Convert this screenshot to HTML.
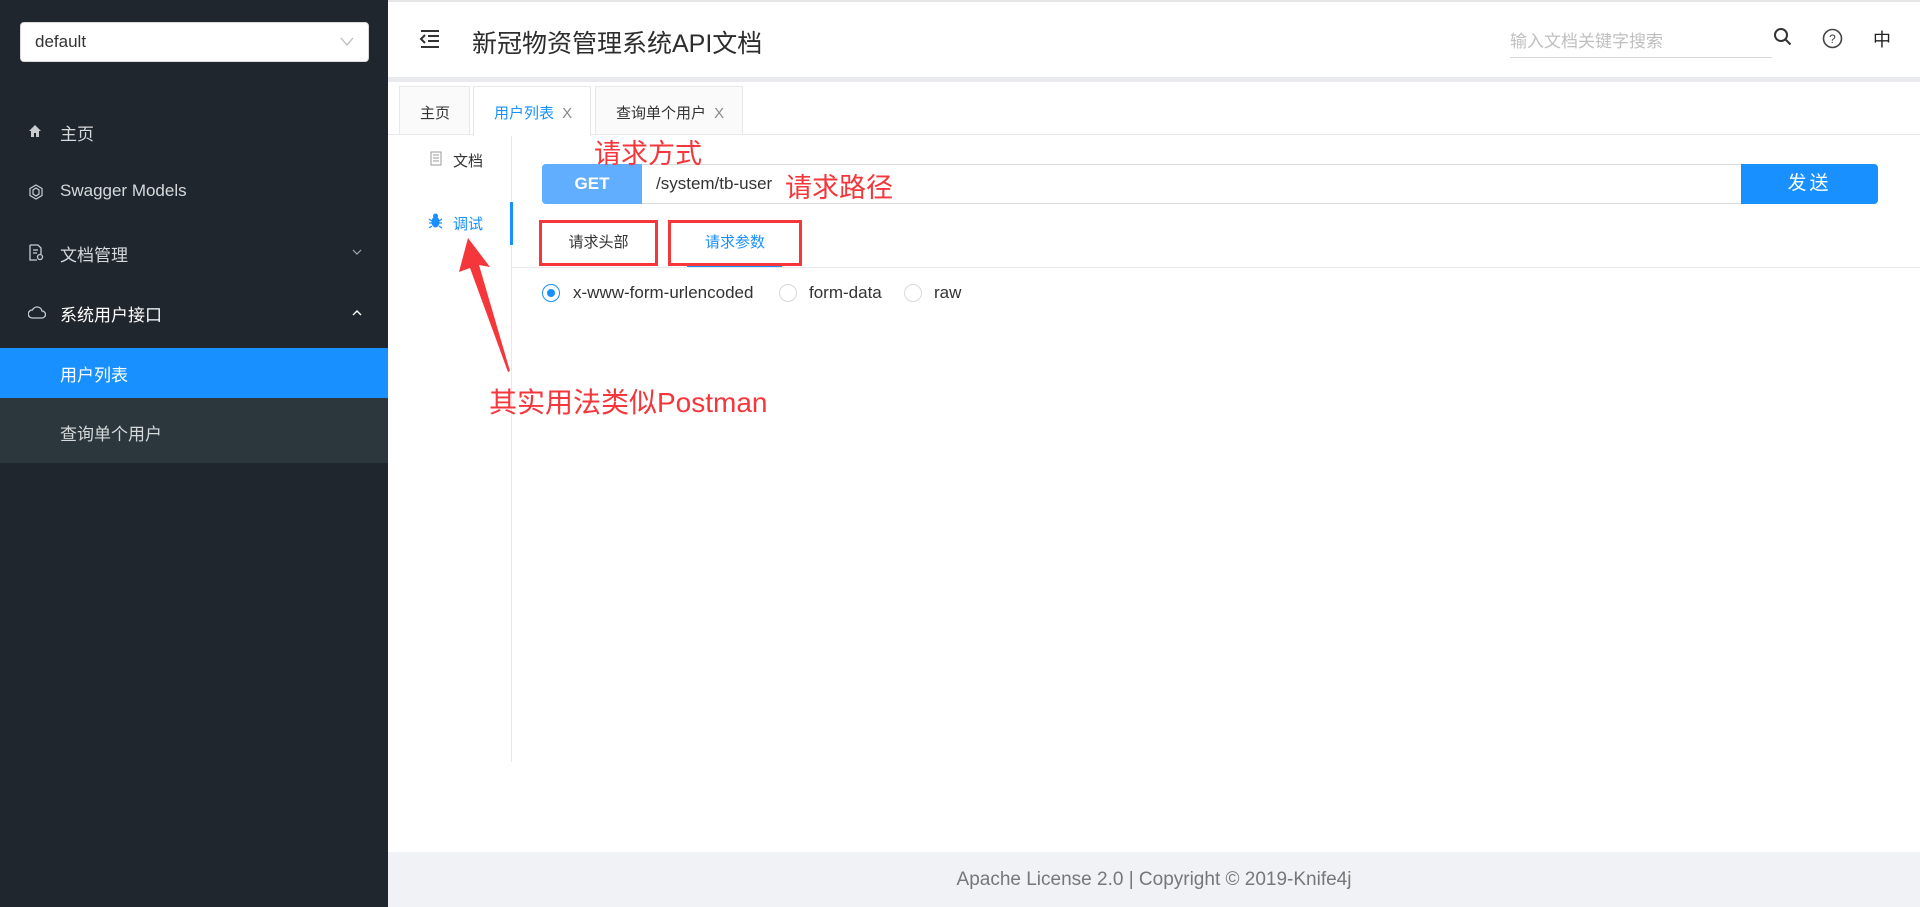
<!DOCTYPE html>
<html><head><meta charset="utf-8"><style>
*{box-sizing:border-box;margin:0;padding:0}
body{width:1920px;height:907px;overflow:hidden;font-family:"Liberation Sans","Noto Sans CJK SC",sans-serif;background:#fff;position:relative}
.a{position:absolute}
.side{left:0;top:0;width:388px;height:907px;background:#1f262d}
.sel{left:20px;top:22px;width:349px;height:40px;background:#fff;border-radius:4px;border:1px solid #d9d9d9;font-size:17px;color:#333;padding:9px 14px}
.mi{left:0;width:388px;color:#d6d9dc;font-size:17px}
.mi span{position:absolute;left:60px}
.ic{position:absolute;left:28px}
.red{color:#f5363a;font-size:27px;font-family:"Liberation Sans","Noto Sans CJK SC",sans-serif}
</style></head><body>
<div class="a" style="left:0;top:0;width:1920px;height:2px;background:#e6e6e6"></div>
<div class="a side"></div>
<div class="a sel">default<svg class="a" style="right:14px;top:14px" width="14" height="10" viewBox="0 0 14 10"><path d="M1 1l6 7 6-7" fill="none" stroke="#bbb" stroke-width="1.3"/></svg></div>
<div class="a mi" style="top:120px;height:24px"><svg class="ic" style="top:4px" width="14" height="14" viewBox="0 0 14 14"><path d="M7 1L1 7h2v6h3V9h2v4h3V7h2z" fill="#c8ccd0"/></svg><span>主页</span></div>
<div class="a mi" style="top:181px;height:24px"><svg class="ic" style="top:3px" width="16" height="16" viewBox="0 0 16 16"><path d="M8 1l6 3.5v7L8 15l-6-3.5v-7z M8 4l3 2v4l-3 2-3-2V6z" fill="none" stroke="#c8ccd0" stroke-width="1.2"/></svg><span>Swagger Models</span></div>
<div class="a mi" style="top:241px;height:24px"><svg class="ic" style="top:3px" width="16" height="18" viewBox="0 0 16 18"><path d="M2 1h8l3 3v6M2 1v15h7M5 6h5M5 9h4" fill="none" stroke="#c8ccd0" stroke-width="1.3"/><circle cx="12" cy="13" r="2.5" fill="none" stroke="#c8ccd0" stroke-width="1.3"/></svg><span>文档管理</span><svg class="a" style="left:352px;top:8px" width="10" height="7" viewBox="0 0 10 7"><path d="M1 1l4 4 4-4" fill="none" stroke="#aaa" stroke-width="1.2"/></svg></div>
<div class="a mi" style="top:301px;height:24px;color:#fff"><svg class="ic" style="top:4px" width="18" height="14" viewBox="0 0 18 14"><path d="M4 13h10a3.5 3.5 0 0 0 0-7 5 5 0 0 0-9.5-1A4 4 0 0 0 4 13z" fill="none" stroke="#c8ccd0" stroke-width="1.3"/></svg><span>系统用户接口</span><svg class="a" style="left:352px;top:8px" width="10" height="7" viewBox="0 0 10 7"><path d="M1 6l4-4 4 4" fill="none" stroke="#fff" stroke-width="1.4"/></svg></div>
<div class="a" style="left:0;top:348px;width:388px;height:50px;background:#1890ff;color:#fff;font-size:17px;padding:13px 0 0 60px">用户列表</div>
<div class="a" style="left:0;top:398px;width:388px;height:65px;background:#2b373d;color:#d6d9dc;font-size:17px;padding:22px 0 0 60px">查询单个用户</div>

<div class="a" style="left:388px;top:77px;width:1532px;height:5px;background:#e8eaee"></div>
<svg class="a" style="left:419px;top:29px" width="22" height="20" viewBox="0 0 22 20"><path d="M2 2h18M9 7h11M9 12h11M2 18h18M6 6l-4 4 4 4" fill="none" stroke="#333" stroke-width="2"/></svg>
<div class="a" style="left:472px;top:24px;font-size:25px;color:#2d2d2d">新冠物资管理系统API文档</div>
<div class="a" style="left:1510px;top:27px;width:262px;height:31px;border-bottom:1px solid #d9d9d9;color:#bfbfbf;font-size:17px">输入文档关键字搜索</div>
<svg class="a" style="left:1773px;top:27px" width="20" height="20" viewBox="0 0 20 20"><circle cx="8" cy="8" r="6" fill="none" stroke="#333" stroke-width="2"/><path d="M12.5 12.5l5 5" stroke="#333" stroke-width="2"/></svg>
<svg class="a" style="left:1822px;top:28px" width="21" height="21" viewBox="0 0 21 21"><circle cx="10.5" cy="10.5" r="9" fill="none" stroke="#444" stroke-width="1.6"/><text x="10.5" y="15" font-size="12" text-anchor="middle" fill="#444" font-family="Liberation Sans">?</text></svg>
<div class="a" style="left:1873px;top:26px;font-size:18px;color:#222">中</div>

<div class="a" style="left:388px;top:134px;width:1532px;height:1px;background:#e8e8e8"></div>
<div class="a" style="left:399px;top:86px;width:71px;height:49px;background:#fafafa;border:1px solid #e8e8e8;font-size:15px;color:#333;padding:15px 0 0 20px">主页</div>
<div class="a" style="left:473px;top:86px;width:118px;height:50px;background:#fff;border:1px solid #e8e8e8;border-bottom:none;font-size:15px;color:#1890ff;padding:15px 0 0 20px">用户列表 <span style="color:#888;margin-left:4px">X</span></div>
<div class="a" style="left:595px;top:86px;width:148px;height:49px;background:#fafafa;border:1px solid #e8e8e8;font-size:15px;color:#333;padding:15px 0 0 20px">查询单个用户 <span style="color:#888;margin-left:4px">X</span></div>

<div class="a" style="left:511px;top:136px;width:1px;height:626px;background:#e8e8e8"></div>
<div class="a" style="left:510px;top:202px;width:3px;height:43px;background:#1890ff"></div>
<svg class="a" style="left:430px;top:151px" width="12" height="15" viewBox="0 0 12 15"><path d="M1 1h10v13H1zM3 4h6M3 7h6M3 10h6" fill="none" stroke="#999" stroke-width="1"/></svg>
<div class="a" style="left:453px;top:150px;font-size:15px;color:#333">文档</div>
<svg class="a" style="left:428px;top:213px" width="15" height="16" viewBox="0 0 15 16"><ellipse cx="7.5" cy="9" rx="4" ry="5.5" fill="#1890ff"/><circle cx="7.5" cy="3" r="2.5" fill="#1890ff"/><path d="M1 6l3 2M14 6l-3 2M1 10h3M14 10h-3M1 15l3-2M14 15l-3-2" stroke="#1890ff" stroke-width="1.3"/></svg>
<div class="a" style="left:453px;top:213px;font-size:15px;color:#1890ff">调试</div>

<div class="a" style="left:542px;top:164px;width:1336px;height:40px;border:1px solid #d9d9d9;border-radius:4px;background:#fff"></div>
<div class="a" style="left:542px;top:164px;width:100px;height:40px;background:#61adff;border-radius:4px 0 0 4px;color:#fff;font-weight:bold;font-size:17px;text-align:center;line-height:40px">GET</div>
<div class="a" style="left:656px;top:164px;line-height:40px;font-size:17px;color:#333">/system/tb-user</div>
<div class="a" style="left:1741px;top:164px;width:137px;height:40px;background:#1890ff;border-radius:0 4px 4px 0;color:#fff;font-size:19px;text-align:center;line-height:40px;letter-spacing:3px">发送</div>

<div class="a" style="left:512px;top:267px;width:1408px;height:1px;background:#e8e8e8"></div>
<div class="a" style="left:687px;top:264px;width:95px;height:3px;background:#1890ff"></div>
<div class="a" style="left:539px;top:220px;width:119px;height:46px;border:3px solid #f5363a;font-size:15px;color:#333;text-align:center;line-height:40px">请求头部</div>
<div class="a" style="left:668px;top:220px;width:134px;height:46px;border:3px solid #f5363a;font-size:15px;color:#1890ff;text-align:center;line-height:40px">请求参数</div>

<div class="a" style="left:542px;top:284px;width:18px;height:18px;border:1px solid #1890ff;border-radius:50%"><div style="margin:4px;width:8px;height:8px;border-radius:50%;background:#1890ff"></div></div>
<div class="a" style="left:573px;top:283px;font-size:17px;color:#333">x-www-form-urlencoded</div>
<div class="a" style="left:779px;top:284px;width:18px;height:18px;border:1px solid #d9d9d9;border-radius:50%"></div>
<div class="a" style="left:809px;top:283px;font-size:17px;color:#333">form-data</div>
<div class="a" style="left:904px;top:284px;width:18px;height:18px;border:1px solid #d9d9d9;border-radius:50%"></div>
<div class="a" style="left:934px;top:283px;font-size:17px;color:#333">raw</div>

<div class="a red" style="left:594px;top:132px">请求方式</div>
<div class="a red" style="left:785px;top:166px">请求路径</div>
<div class="a red" style="left:489px;top:381px;font-size:28px">其实用法类似Postman</div>
<svg class="a" style="left:455px;top:230px" width="60" height="145" viewBox="0 0 60 145"><path d="M13 8L4 42l11-4 38 104 2-1L24 35l11 2z" fill="#f5363a"/></svg>

<div class="a" style="left:388px;top:852px;width:1532px;height:55px;background:#f0f2f5;color:#777;font-size:19px;text-align:center;line-height:55px">Apache License 2.0 | Copyright © 2019-Knife4j</div>
</body></html>
